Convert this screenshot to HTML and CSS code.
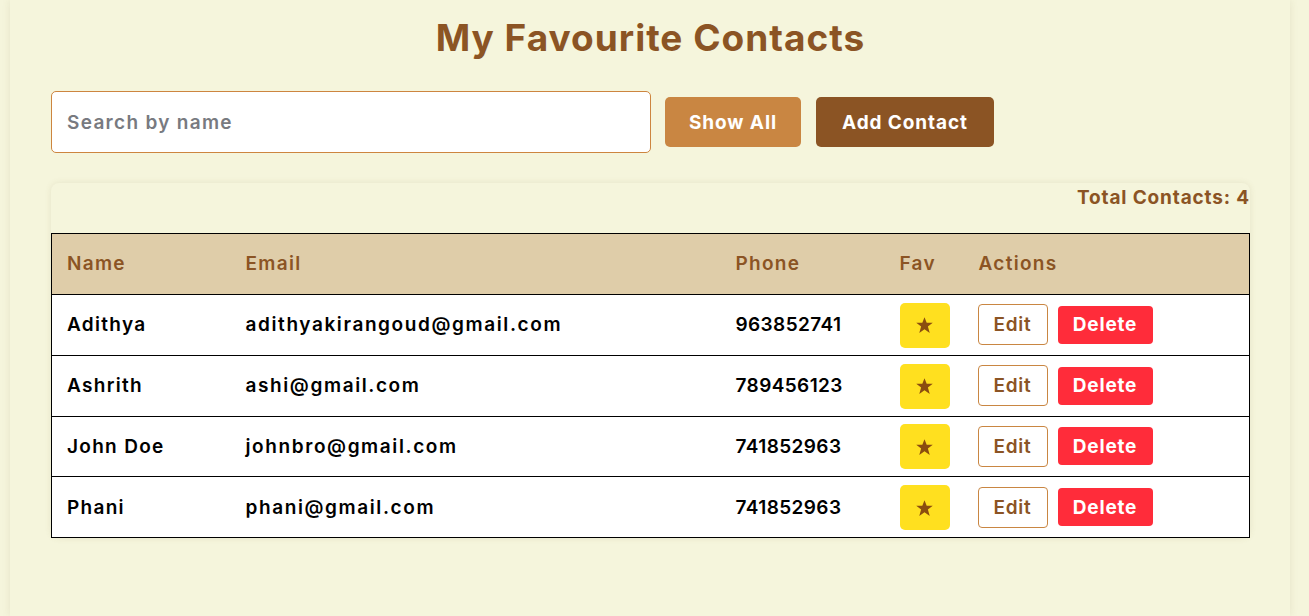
FILE: index.html
```html
<!DOCTYPE html>
<html lang="en">
<head>
<meta charset="utf-8">
<title>My Favourite Contacts</title>
<link rel="stylesheet" href="styles.css">
</head>
<body>
<div class="app">
  <h1 class="title">My Favourite Contacts</h1>
  <div class="toolbar">
    <input class="search" type="text" placeholder="Search by name">
    <button class="btn btn-show">Show All</button>
    <button class="btn btn-add">Add Contact</button>
  </div>
  <div class="card">
    <div class="total">Total Contacts: 4</div>
    <table class="contacts">
      <thead>
        <tr>
          <th class="c-name">Name</th>
          <th class="c-email">Email</th>
          <th class="c-phone">Phone</th>
          <th class="c-fav">Fav</th>
          <th class="c-actions">Actions</th>
        </tr>
      </thead>
      <tbody>
        <tr>
          <td>Adithya</td>
          <td class="email">adithyakirangoud@gmail.com</td>
          <td class="phone">963852741</td>
          <td><button class="fav"><svg viewBox="0 0 24 24" width="19" height="18"><polygon points="12,1.5 14.9,9 23,9 16.5,14 19,22.5 12,17.5 5,22.5 7.5,14 1,9 9.1,9"/></svg></button></td>
          <td><div class="actions"><button class="edit">Edit</button><button class="del">Delete</button></div></td>
        </tr>
        <tr>
          <td>Ashrith</td>
          <td class="email">ashi@gmail.com</td>
          <td class="phone">789456123</td>
          <td><button class="fav"><svg viewBox="0 0 24 24" width="19" height="18"><polygon points="12,1.5 14.9,9 23,9 16.5,14 19,22.5 12,17.5 5,22.5 7.5,14 1,9 9.1,9"/></svg></button></td>
          <td><div class="actions"><button class="edit">Edit</button><button class="del">Delete</button></div></td>
        </tr>
        <tr>
          <td>John Doe</td>
          <td class="email">johnbro@gmail.com</td>
          <td class="phone">741852963</td>
          <td><button class="fav"><svg viewBox="0 0 24 24" width="19" height="18"><polygon points="12,1.5 14.9,9 23,9 16.5,14 19,22.5 12,17.5 5,22.5 7.5,14 1,9 9.1,9"/></svg></button></td>
          <td><div class="actions"><button class="edit">Edit</button><button class="del">Delete</button></div></td>
        </tr>
        <tr>
          <td>Phani</td>
          <td class="email">phani@gmail.com</td>
          <td class="phone">741852963</td>
          <td><button class="fav"><svg viewBox="0 0 24 24" width="19" height="18"><polygon points="12,1.5 14.9,9 23,9 16.5,14 19,22.5 12,17.5 5,22.5 7.5,14 1,9 9.1,9"/></svg></button></td>
          <td><div class="actions"><button class="edit">Edit</button><button class="del">Delete</button></div></td>
        </tr>
      </tbody>
    </table>
  </div>
</div>
</body>
</html>
```

FILE: styles.css
```css
* { box-sizing: border-box; }

body {
  margin: 0;
  background: #f5f5dc;
  font-family: Inter, "Noto Sans", sans-serif;
}

.app {
  width: 1280px;
  min-height: 616px;
  margin-left: 10px;
  padding: 0 40px 0 41px;
  background: #f5f5dc;
  box-shadow: 0 0 8px rgba(120, 110, 60, 0.12);
}

.title {
  margin: 0;
  padding-top: 14px;
  height: 91px;
  text-align: center;
  font-size: 37px;
  font-weight: 700;
  line-height: 48px;
  color: #8b5424;
  letter-spacing: 1px;
}

.toolbar {
  display: flex;
  align-items: center;
  gap: 14px;
}

.search {
  width: 600px;
  height: 62px;
  border: 1px solid #cd853f;
  border-radius: 5px;
  padding: 0 15px;
  font-family: inherit;
  font-size: 19px;
  font-weight: 600;
  letter-spacing: 1.3px;
  background: #fff;
  outline: none;
}

.search::placeholder {
  color: #787a80;
}

.btn {
  height: 50px;
  border: none;
  border-radius: 5px;
  color: #fff;
  font-family: inherit;
  font-size: 19px;
  font-weight: 700;
  letter-spacing: 0.9px;
  padding: 0;
}

.btn-show {
  width: 136px;
  background: #c98642;
}

.btn-add {
  width: 178px;
  margin-left: 1px;
  background: #8b5424;
}

.card {
  margin-top: 30px;
  width: 1199px;
  border-radius: 8px;
  box-shadow: 0 0 6px rgba(120, 110, 60, 0.12);
}

.total {
  height: 50px;
  text-align: right;
  padding-top: 3px;
  font-size: 19px;
  font-weight: 700;
  line-height: 24px;
  letter-spacing: 0.85px;
  color: #8b5424;
}

.contacts {
  width: 100%;
  border-collapse: collapse;
  border: 1px solid #000;
  table-layout: fixed;
}

.contacts th,
.contacts td {
  text-align: left;
  padding: 0 15px;
  border-bottom: 1px solid #000;
  font-size: 19px;
  font-weight: 600;
  letter-spacing: 1.3px;
}

.contacts th {
  height: 61px;
  padding-bottom: 2px;
  background: #dfcda9;
  color: #8b5424;
}

.contacts td {
  height: 60.75px;
  background: #fff;
  color: #000;
}

.contacts td.email { letter-spacing: 1.6px; }
.contacts td.phone { letter-spacing: 0.4px; }

.c-name { width: 179px; }
.c-email { width: 490px; }
.c-phone { width: 164px; }
.c-fav { width: 79px; }

.fav {
  width: 50px;
  height: 45px;
  border: none;
  border-radius: 5px;
  background: #ffe01f;
  display: flex;
  align-items: center;
  justify-content: center;
  padding: 0;
  margin-top: 1px;
}

.fav svg {
  fill: #8b4d0f;
}

.actions {
  display: flex;
  align-items: center;
  gap: 10px;
  margin-left: -1px;
}

.edit {
  width: 70px;
  height: 41px;
  background: #fff;
  border: 1px solid #c98642;
  border-radius: 4px;
  color: #8b5424;
  font-family: inherit;
  font-size: 19px;
  font-weight: 600;
  letter-spacing: 0.8px;
  padding: 0;
}

.del {
  width: 95px;
  height: 38px;
  background: #ff2c3a;
  border: none;
  border-radius: 4px;
  color: #fff;
  font-family: inherit;
  font-size: 19px;
  font-weight: 700;
  letter-spacing: 0.8px;
  padding: 0;
}
```
